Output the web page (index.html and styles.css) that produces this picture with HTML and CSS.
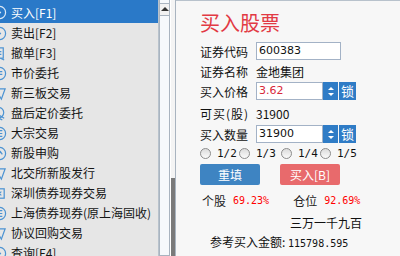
FILE: index.html
```html
<!DOCTYPE html>
<html lang="zh-CN">
<head>
    <meta charset="UTF-8">
    <title>买入股票</title>
    <link rel="stylesheet" href="styles.css">
</head>
<body>
    <div class="app">
        <ul class="menu">
            <li class="item selected"><svg class="ico" viewBox="0 0 16 16"><circle cx="8" cy="8" r="6.5"/><path d="M6 5l3 3-3 3"/></svg>买入[F1]</li>
            <li class="item"><svg class="ico" viewBox="0 0 16 16"><circle cx="8" cy="8" r="6.5"/><path d="M6 5l3 3-3 3"/></svg>卖出[F2]</li>
            <li class="item"><svg class="ico" viewBox="0 0 16 16"><rect x="2" y="2" width="10" height="11"/><path d="M5 6h5M5 9h5M9 13l4 2"/></svg>撤单[F3]</li>
            <li class="item"><svg class="ico" viewBox="0 0 16 16"><circle cx="8" cy="8" r="6.5"/><path d="M5 6h6M5 9h6"/></svg>市价委托</li>
            <li class="item"><svg class="ico" viewBox="0 0 16 16"><path d="M2 3l12 0-4 11-3-5z"/></svg>新三板交易</li>
            <li class="item"><svg class="ico" viewBox="0 0 16 16"><circle cx="7" cy="7" r="5.5"/><path d="M6 12l5 3M8 10l5 3"/></svg>盘后定价委托</li>
            <li class="item"><svg class="ico" viewBox="0 0 16 16"><circle cx="8" cy="8" r="6.5"/><path d="M5 5h6M5 8h6M5 11h6"/></svg>大宗交易</li>
            <li class="item"><svg class="ico" viewBox="0 0 16 16"><circle cx="8" cy="8" r="6.5"/><path d="M5 7l2 3 2-4 2 3"/></svg>新股申购</li>
            <li class="item"><svg class="ico" viewBox="0 0 16 16"><path d="M2 3l12 0-4 11-3-5z"/></svg>北交所新股发行</li>
            <li class="item"><svg class="ico" viewBox="0 0 16 16"><rect x="2" y="3" width="11" height="10"/><path d="M5 6l5 4M10 6l-5 4"/></svg>深圳债券现券交易</li>
            <li class="item"><svg class="ico" viewBox="0 0 16 16"><circle cx="8" cy="8" r="6.5"/><path d="M5 5h6M5 8h6M5 11h6"/></svg>上海债券现券(原上海固收)</li>
            <li class="item"><svg class="ico" viewBox="0 0 16 16"><path d="M2 3l12 0-4 11-3-5z"/></svg>协议回购交易</li>
            <li class="item"><svg class="ico" viewBox="0 0 16 16"><circle cx="8" cy="8" r="6.5"/><path d="M6 5l3 3-3 3"/></svg>查询[F4]</li>
        </ul>

        <div class="scrollbar">
            <div class="track">
                <div class="arrow-up"></div>
            </div>
            <div class="rail">
                <div class="thumb"></div>
            </div>
        </div>

        <div class="panel">
            <h1 class="title">买入股票</h1>

            <div class="row">
                <span class="label">证券代码</span>
                <div class="field wide">600383</div>
            </div>
            <div class="row">
                <span class="label">证券名称</span>
                <span class="value">金地集团</span>
            </div>
            <div class="row">
                <span class="label">买入价格</span>
                <div class="field short red">3.62</div>
                <div class="spin"><span class="tri up"></span><span class="tri down"></span></div>
                <div class="lock">锁</div>
            </div>
            <div class="row gap">
                <span class="label spaced">可买(股)</span>
                <span class="value">31900</span>
            </div>
            <div class="row">
                <span class="label">买入数量</span>
                <div class="field short">31900</div>
                <div class="spin"><span class="tri up"></span><span class="tri down"></span></div>
                <div class="lock">锁</div>
            </div>

            <div class="radios">
                <span class="radio"></span><span class="frac f1">1/2</span>
                <span class="radio"></span><span class="frac f2">1/3</span>
                <span class="radio"></span><span class="frac f3">1/4</span>
                <span class="radio"></span><span class="frac">1/5</span>
            </div>

            <div class="buttons">
                <button class="btn reset">重填</button>
                <button class="btn buy">买入[B]</button>
            </div>

            <div class="stats">
                <span class="stat-label">个股</span><span class="pct">69.23%</span>
                <span class="stat-label pos">仓位</span><span class="pct">92.69%</span>
            </div>
            <div class="words">三万一千九百</div>
            <div class="amount">参考买入金额: <span class="num">115798.595</span></div>
        </div>
    </div>
</body>
</html>
```

FILE: styles.css
```css
body {
    margin: 0;
    width: 400px;
    height: 256px;
    overflow: hidden;
    font-family: "Noto Sans CJK SC", "DejaVu Sans", sans-serif;
    font-size: 12px;
    color: #111;
}
.app {
    display: flex;
    height: 256px;
}
.menu {
    list-style: none;
    margin: 0;
    padding: 0;
    width: 158px;
    background-color: #e6e6e6;
    border-right: 1px solid #b8c2cc;
    overflow: hidden;
}
.item {
    position: relative;
    height: 20px;
    line-height: 20px;
    padding-left: 11px;
    white-space: nowrap;
    color: #151515;
    font-size: 12px;
}
.item.selected {
    box-sizing: border-box;
    height: 23px;
    padding-top: 3px;
    background-color: #2a79c8;
    color: #fff;
}
.ico {
    position: absolute;
    left: -8px;
    top: 3px;
    width: 15px;
    height: 15px;
    fill: none;
    stroke: #4c93d2;
    stroke-width: 1.3;
}
.selected .ico {
    top: 5px;
    stroke: #dbe9f7;
}
.scrollbar {
    display: flex;
    width: 17px;
}
.track {
    width: 10px;
    border: 1px solid #a9b4c0;
    border-top: 0;
    background-color: #f6f9fc;
}
.arrow-up {
    position: relative;
    height: 11px;
    margin-top: 3px;
    border-top: 1px solid #a9b4c0;
    border-bottom: 1px solid #a9b4c0;
    background-color: #f2f2f2;
}
.arrow-up::after {
    content: "";
    position: absolute;
    left: 1px;
    top: 3px;
    border-left: 4px solid transparent;
    border-right: 4px solid transparent;
    border-bottom: 4px solid #333;
}
.rail {
    position: relative;
    width: 4px;
    margin-left: 1px;
    background-color: #f4f4f4;
    border-right: 1px solid #a9b4c0;
}
.thumb {
    position: absolute;
    left: 0;
    right: 0;
    top: 178px;
    bottom: 0;
    background-color: #7a7a7a;
}
.panel {
    flex: 1;
    background-color: #f7f7f7;
    border-top: 1px solid #b8c2cc;
    padding-left: 24px;
}
.title {
    margin: 0;
    height: 40px;
    line-height: 44px;
    font-size: 20px;
    font-weight: normal;
    color: #e23a44;
}
.row {
    display: flex;
    align-items: center;
    height: 20px;
}
.row.gap {
    height: 22px;
    margin-top: 1px;
}
.label {
    flex-shrink: 0;
    width: 56px;
    white-space: nowrap;
}
.label.spaced {
    letter-spacing: 1px;
}
.field {
    box-sizing: border-box;
    height: 18px;
    line-height: 16px;
    border: 1px solid #a3b2c6;
    background-color: #fff;
    padding-left: 2px;
    font-family: "DejaVu Sans", sans-serif;
    font-size: 11px;
}
.field.wide {
    width: 85px;
}
.field.short {
    width: 67px;
}
.field.red {
    color: #d8283a;
}
.spin {
    width: 15px;
    height: 18px;
    background-color: #2f7cc6;
    display: flex;
    flex-direction: column;
    justify-content: center;
    align-items: center;
    gap: 3px;
}
.tri {
    width: 0;
    height: 0;
    border-left: 3px solid transparent;
    border-right: 3px solid transparent;
}
.tri.up {
    border-bottom: 3px solid #fff;
}
.tri.down {
    border-top: 3px solid #fff;
}
.lock {
    width: 17px;
    height: 18px;
    margin-left: 1px;
    line-height: 18px;
    text-align: center;
    background-color: #2f7cc6;
    color: #fff;
    font-size: 13px;
}
.radios {
    display: flex;
    align-items: center;
    height: 16px;
    margin-top: 1px;
    font-family: "DejaVu Sans Mono", monospace;
    font-size: 11px;
}
.radio {
    flex-shrink: 0;
    box-sizing: border-box;
    width: 11px;
    height: 11px;
    border-radius: 50%;
    border: 1px solid #8c8c8c;
    background: linear-gradient(#dcdcdc, #fafafa);
}
.frac {
    margin-left: 6px;
}
.f1 {
    width: 22px;
}
.f2 {
    width: 25px;
}
.f3 {
    width: 22px;
}
.buttons {
    display: flex;
    gap: 20px;
    margin-top: 3px;
}
.btn {
    width: 60px;
    height: 21px;
    border: none;
    border-radius: 2px;
    padding: 0;
    color: #fff;
    font-family: "Noto Sans CJK SC", sans-serif;
    font-size: 12px;
}
.btn.reset {
    background-color: #3e84c2;
}
.btn.buy {
    background-color: #e86a6c;
}
.stats {
    display: flex;
    align-items: center;
    height: 20px;
    margin-top: 5px;
    padding-left: 2px;
}
.stat-label {
    color: #222;
}
.stat-label.pos {
    margin-left: 24px;
}
.pct {
    margin-left: 7px;
    color: #f00;
    font-family: "DejaVu Sans Mono", monospace;
    font-size: 10px;
}
.words {
    height: 20px;
    line-height: 20px;
    margin-top: 3px;
    padding-left: 90px;
}
.amount {
    height: 20px;
    line-height: 20px;
    margin-top: -1px;
    padding-left: 10px;
}
.num {
    font-family: "DejaVu Sans Mono", monospace;
    font-size: 10px;
}
```
